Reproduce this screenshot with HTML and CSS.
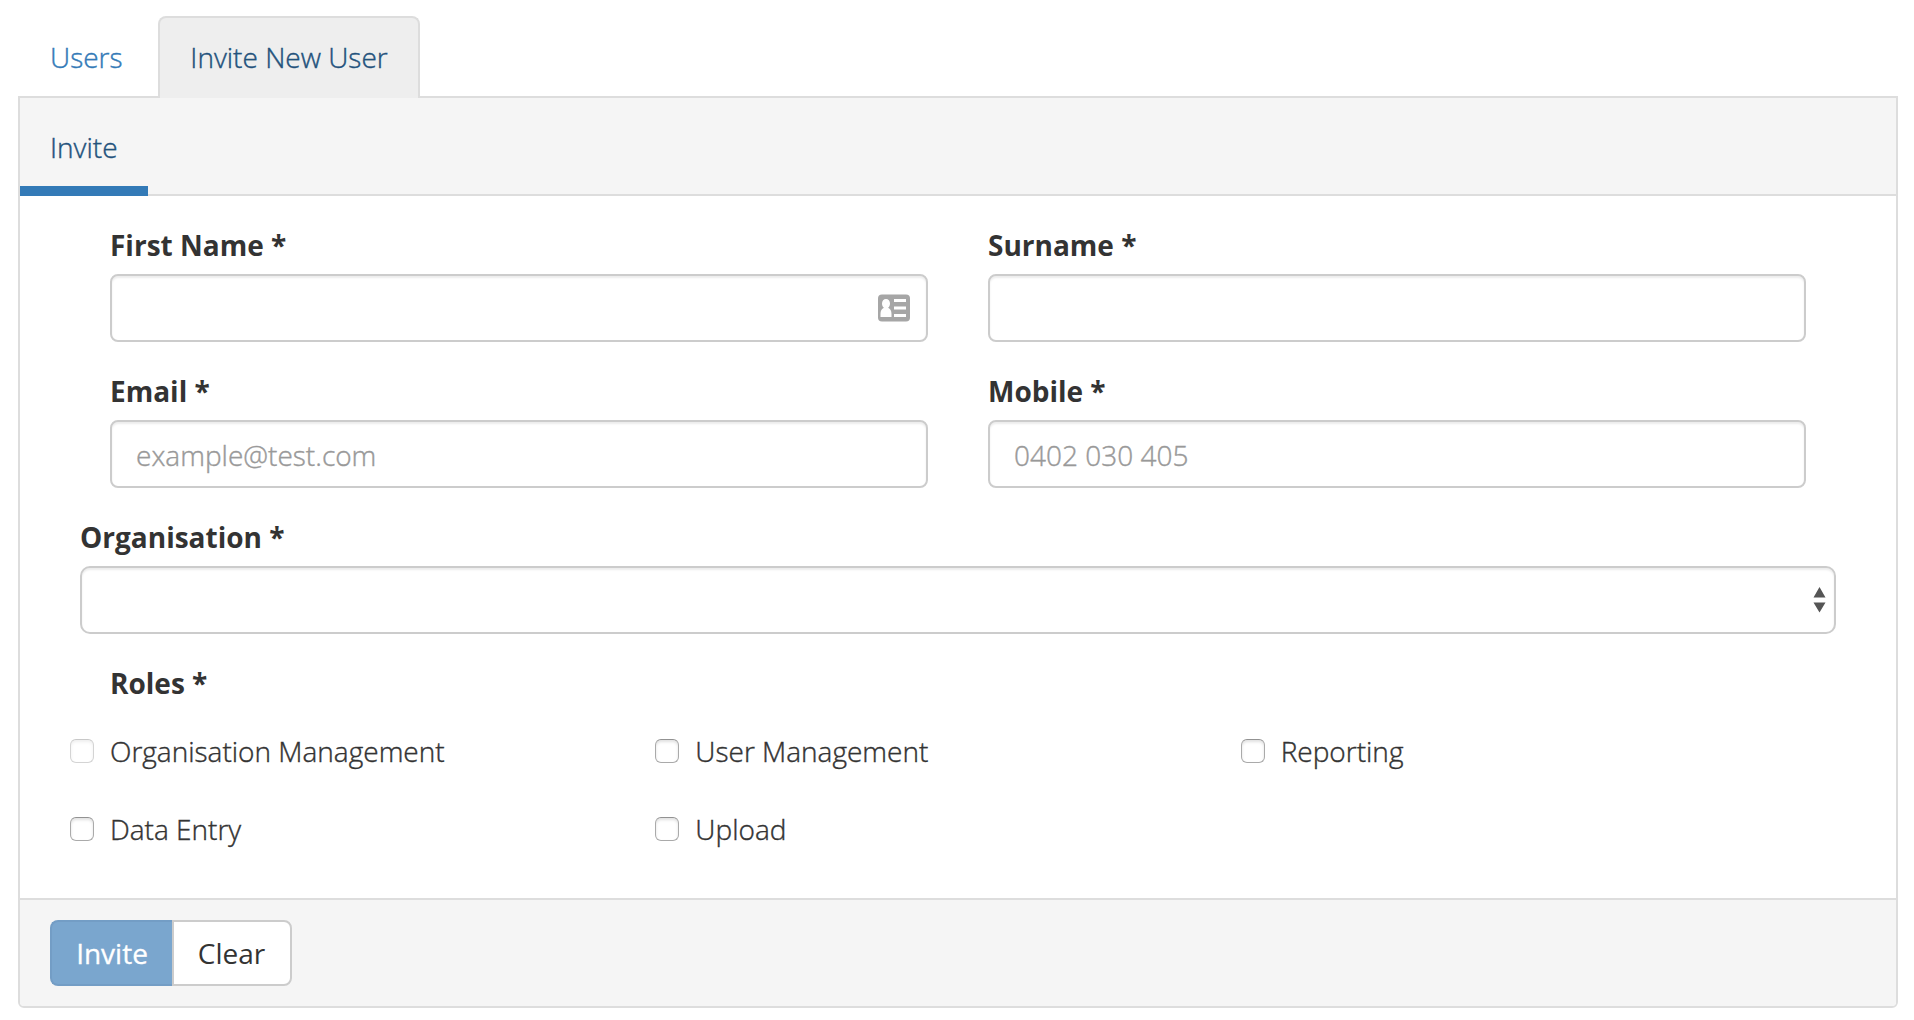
FILE: index.html
```html
<!DOCTYPE html>
<html lang="en">
<head>
<meta charset="utf-8">
<title>Invite New User</title>
<link rel="stylesheet" href="styles.css">
</head>
<body>
<nav class="tabs">
  <a class="tab tab-users">Users</a>
  <a class="tab tab-invite active">Invite New User</a>
</nav>
<main class="panel">
  <header class="panel-header"><a class="subtab">Invite</a></header>
  <form class="panel-body">
    <div class="row">
      <div class="field">
        <label class="label">First Name *</label>
        <div class="control control-icon">
          <svg class="card-icon" width="32" height="28" viewBox="0 0 32 28">
            <rect y=".5" width="32" height="27" rx="4" fill="#a6a6a6"/>
            <path fill="#fff" d="M8 5c2.400 0 4 1.900 4 4.500 0 1.800-.7 3.300-1.900 4.200 2.200.9 3.400 3 3.400 6V23h-11v-3.300c0-3 1.200-5.100 3.400-6C4.700 12.800 4 11.300 4 9.500 4 6.900 5.600 5 8 5zM16 5h12v3H16zM16 12.500h12v3H16zM16 20h12v3H16z"/>
          </svg>
        </div>
      </div>
      <div class="field">
        <label class="label">Surname *</label>
        <div class="control"></div>
      </div>
    </div>
    <div class="row">
      <div class="field">
        <label class="label">Email *</label>
        <div class="control">example@test.com</div>
      </div>
      <div class="field">
        <label class="label">Mobile *</label>
        <div class="control">0402 030 405</div>
      </div>
    </div>
    <div class="group">
      <label class="label">Organisation *</label>
      <div class="control select">
        <svg class="arrows" width="14" height="26" viewBox="0 0 14 26">
          <path fill="#555" d="M6.500 0l6 10.500h-12zM.5 15.500h12l-6 10z"/>
        </svg>
      </div>
    </div>
    <div class="roles-title label">Roles *</div>
    <div class="roles">
      <label class="role disabled"><span class="box"></span>Organisation Management</label>
      <label class="role"><span class="box"></span>User Management</label>
      <label class="role"><span class="box"></span>Reporting</label>
      <label class="role"><span class="box"></span>Data Entry</label>
      <label class="role"><span class="box"></span>Upload</label>
    </div>
  </form>
  <footer class="panel-footer">
    <button class="btn btn-invite" type="button">Invite</button>
    <button class="btn btn-clear" type="button">Clear</button>
  </footer>
</main>
</body>
</html>
```
FILE: styles.css
```css
* { box-sizing: border-box; }
body {
  margin: 0;
  padding: 16px 16px 0 18px;
  background: #fff;
  color: #333;
  font: 300 28px/40px "Open Sans", sans-serif;
  -webkit-text-stroke: .4px currentColor;
}
.tabs { display: flex; gap: 4px; height: 80px; }
.tab {
  height: 82px;
  padding: 19px 30px;
  border: 2px solid transparent;
  border-bottom: 0;
  border-radius: 8px 8px 0 0;
  color: #337ab7;
  text-align: center;
  white-space: nowrap;
}
.tab-users { width: 136px; }
.tab-invite { width: 262px; }
.tab.active {
  position: relative;
  background: #eee;
  border-color: #ddd;
  color: #23527c;
}
.panel {
  display: flex;
  flex-direction: column;
  height: 912px;
  border: 2px solid #ddd;
  border-radius: 0 0 6px 6px;
  overflow: hidden;
}
.panel-header {
  display: flex;
  height: 98px;
  background: #f5f5f5;
  box-shadow: inset 0 -2px #ddd;
}
.subtab {
  width: 128px;
  padding: 29px 0 19px 30px;
  border-bottom: 10px solid #337ab7;
  color: #23527c;
}
.panel-body { flex: 1; padding: 28px 60px 0; }
.row { display: grid; grid-template-columns: 1fr 1fr; }
.field { padding: 0 30px; }
.label {
  display: block;
  padding-top: 1px;
  margin-bottom: 9px;
  font-weight: 700;
  -webkit-text-stroke-width: 0;
}
.control {
  display: flex;
  align-items: center;
  height: 68px;
  margin-bottom: 28px;
  padding: 1px 24px 0;
  border: 2px solid #ccc;
  border-radius: 8px;
  background: #fff;
  box-shadow: inset 0 2px 2px rgba(0, 0, 0, .075);
  color: #999;
}
.control-icon { justify-content: flex-end; padding: 0 16px 0 0; }
.select { justify-content: flex-end; padding: 0 7px 0 0; border-radius: 10px; }
.roles-title { padding-left: 30px; }
.roles {
  display: grid;
  grid-template-columns: repeat(3, 1fr);
  row-gap: 38px;
  margin: 28px 0 0 -10px;
  width: 1756px;
}
.role { display: flex; align-items: flex-start; gap: 16px; white-space: nowrap; }
.box {
  width: 24px;
  height: 24px;
  margin-top: 8px;
  border: 1.5px solid #aaa;
  border-top-color: #929292;
  border-radius: 6px;
  box-shadow: inset 0 2px 3px rgba(0, 0, 0, .12);
}
.disabled .box { opacity: .5; }
.panel-footer {
  display: flex;
  height: 108px;
  padding: 20px 30px;
  border-top: 2px solid #ddd;
  background: #f5f5f5;
}
.btn {
  height: 66px;
  padding: 0;
  border: 2px solid #ccc;
  font: 400 28px/38px "Open Sans", sans-serif;
  -webkit-text-stroke-width: 0;
}
.btn-invite {
  width: 122px;
  border-color: #739dc5;
  border-right-width: 0;
  border-radius: 8px 0 0 8px;
  background: #7aa6ce;
  color: #fff;
  -webkit-text-stroke-width: .3px;
}
.btn-clear {
  width: 120px;
  padding-right: 1px;
  border-radius: 0 8px 8px 0;
  background: #fff;
  color: #333;
}
```
